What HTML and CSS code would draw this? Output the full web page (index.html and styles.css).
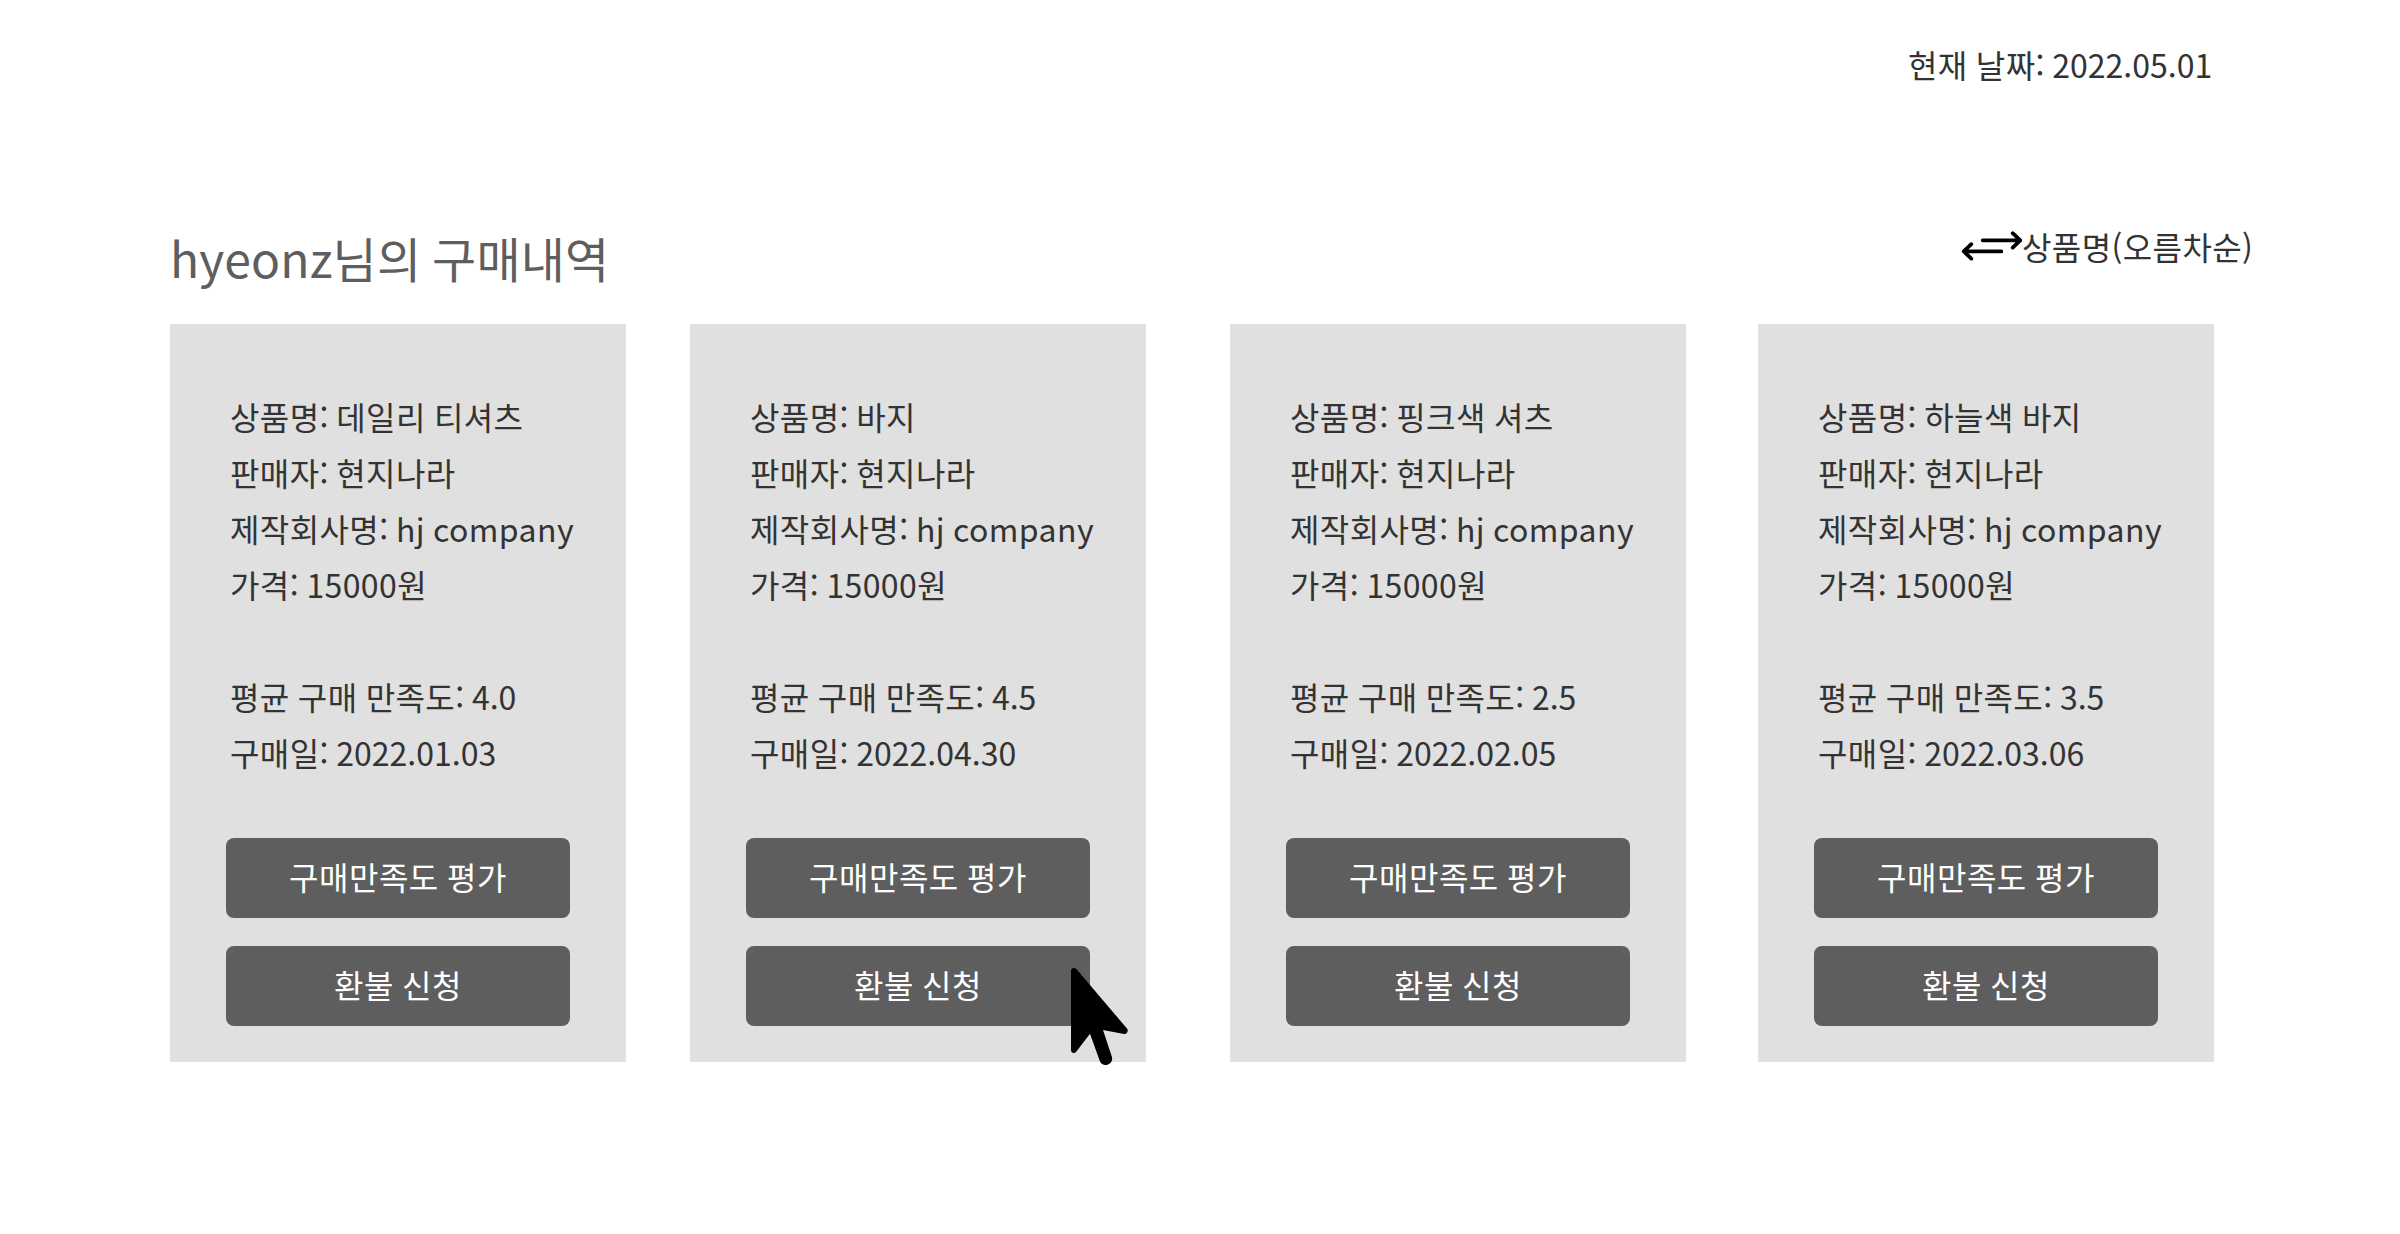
FILE: index.html
```html
<!DOCTYPE html>
<html lang="ko">
<head>
<meta charset="utf-8">
<title>구매내역</title>
<link rel="stylesheet" href="styles.css">
</head>
<body>
<main class="page">
  <p class="today"><span class="label">현재 날짜:</span> <span class="num">2022.05.01</span></p>
  <header class="heading">
    <h1 class="title">hyeonz님의 구매내역</h1>
    <div class="sort">
      <svg class="sort-icon" viewBox="0 0 62 32" width="62" height="32" fill="none" stroke="#000" stroke-width="3.8" stroke-linecap="round" stroke-linejoin="round">
        <path d="M22.7 10.3H60M52.7 3.2L60.3 10.3L52.7 17.6"/>
        <path d="M41.3 21.4H4M11.3 14.2L3.7 21.4L11.3 28.6"/>
      </svg>
      <span class="sort-label">상품명(오름차순)</span>
    </div>
  </header>
  <section class="cards">
    <article class="card">
      <div class="info">
        <p><span class="label">상품명:</span> 데일리 티셔츠</p>
        <p><span class="label">판매자:</span> 현지나라</p>
        <p><span class="label">제작회사명:</span> hj company</p>
        <p><span class="label">가격:</span> 15000원</p>
        <p class="rating"><span class="label">평균 구매 만족도:</span> <span class="num">4.0</span></p>
        <p><span class="label">구매일:</span> <span class="num">2022.01.03</span></p>
      </div>
      <button class="button">구매만족도 평가</button>
      <button class="button">환불 신청</button>
    </article>
    <article class="card card-second">
      <div class="info">
        <p><span class="label">상품명:</span> 바지</p>
        <p><span class="label">판매자:</span> 현지나라</p>
        <p><span class="label">제작회사명:</span> hj company</p>
        <p><span class="label">가격:</span> 15000원</p>
        <p class="rating"><span class="label">평균 구매 만족도:</span> <span class="num">4.5</span></p>
        <p><span class="label">구매일:</span> <span class="num">2022.04.30</span></p>
      </div>
      <button class="button">구매만족도 평가</button>
      <button class="button">환불 신청</button>
      <svg class="cursor" viewBox="0 0 58 98" width="58" height="98">
        <path d="M0 3C0 .2 3.5-1 5.6 1.3L56 60.6C57.8 63 56 66.4 53 66L32 62L40.8 88.5C43.4 96.5 31.6 100.8 28.7 92.8L19 65.7L5.6 83.2C3.7 86.2 0 85 0 82Z"/>
      </svg>
    </article>
    <article class="card card-third">
      <div class="info">
        <p><span class="label">상품명:</span> 핑크색 셔츠</p>
        <p><span class="label">판매자:</span> 현지나라</p>
        <p><span class="label">제작회사명:</span> hj company</p>
        <p><span class="label">가격:</span> 15000원</p>
        <p class="rating"><span class="label">평균 구매 만족도:</span> <span class="num">2.5</span></p>
        <p><span class="label">구매일:</span> <span class="num">2022.02.05</span></p>
      </div>
      <button class="button">구매만족도 평가</button>
      <button class="button">환불 신청</button>
    </article>
    <article class="card card-fourth">
      <div class="info">
        <p><span class="label">상품명:</span> 하늘색 바지</p>
        <p><span class="label">판매자:</span> 현지나라</p>
        <p><span class="label">제작회사명:</span> hj company</p>
        <p><span class="label">가격:</span> 15000원</p>
        <p class="rating"><span class="label">평균 구매 만족도:</span> <span class="num">3.5</span></p>
        <p><span class="label">구매일:</span> <span class="num">2022.03.06</span></p>
      </div>
      <button class="button">구매만족도 평가</button>
      <button class="button">환불 신청</button>
    </article>
  </section>
</main>
</body>
</html>
```
FILE: styles.css
```css
* {
  box-sizing: border-box;
}

body,
p,
h1 {
  margin: 0;
}

body {
  background: #fff;
  color: #333;
  font-family: "Noto Sans CJK KR", sans-serif;
  font-size: 32px;
  line-height: 56px;
  letter-spacing: 0.4px;
  word-spacing: -1.2px;
  white-space: nowrap;
}

.page {
  width: 2400px;
  height: 1234px;
  padding: 36px 0 0 170px;
  overflow: hidden;
}

.today {
  padding-left: 1738px;
}

.label {
  margin-right: -0.8px;
}

.num {
  letter-spacing: 0;
}

.heading {
  display: flex;
  align-items: flex-start;
  height: 232px;
  padding-top: 126px;
}

.title {
  width: 1790px;
  padding-top: 3px;
  color: #5e5e5e;
  font-size: 48px;
  font-weight: 400;
  line-height: 72px;
  letter-spacing: 0.15px;
  word-spacing: -2.7px;
}

.sort {
  display: flex;
  align-items: center;
  height: 56px;
}

.sort-icon {
  display: block;
}

.cards {
  display: flex;
}

.card {
  position: relative;
  flex: none;
  display: flex;
  flex-direction: column;
  gap: 28px;
  width: 456px;
  height: 738px;
  padding: 64px 56px 0;
  background: #e0e0e0;
}

.card-second {
  margin-left: 64px;
}

.card-third {
  margin-left: 84px;
}

.card-fourth {
  margin-left: 72px;
}

.info {
  padding: 0 0 30px 4px;
}

.rating {
  margin-top: 56px;
}

.button {
  height: 80px;
  padding: 0 0 4px;
  border: 0;
  border-radius: 8px;
  background: #5e5e5e;
  color: #fff;
  font: inherit;
  letter-spacing: 0.5px;
  word-spacing: -1.2px;
}

.cursor {
  position: absolute;
  left: 381px;
  top: 644px;
  overflow: visible;
}
```
